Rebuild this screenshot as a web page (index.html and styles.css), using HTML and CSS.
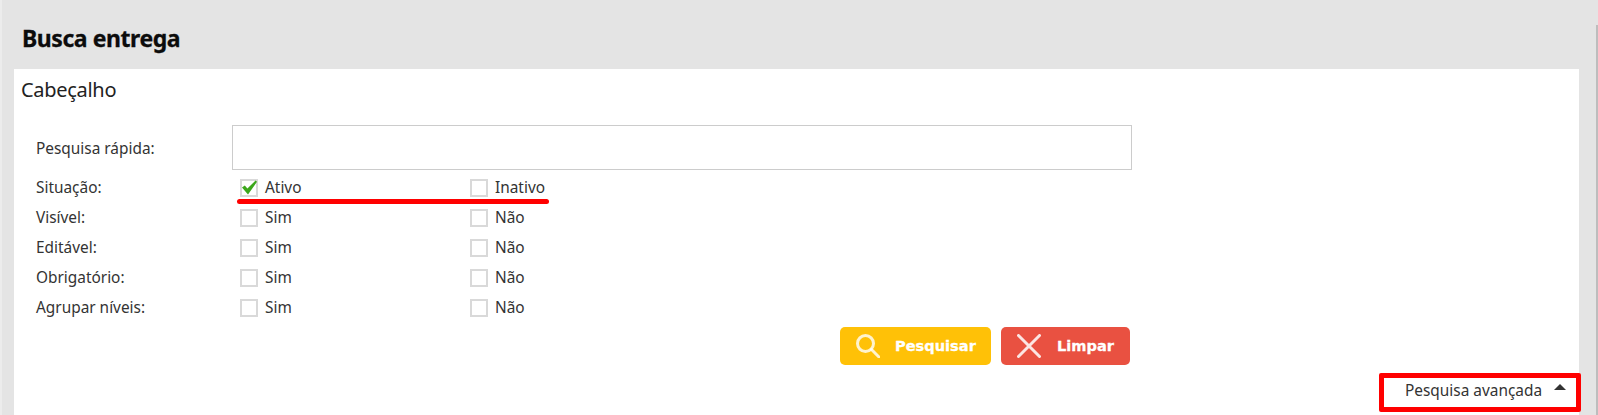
FILE: index.html
```html
<!doctype html>
<html>
<head>
<meta charset="utf-8">
<title>Busca entrega</title>
<link rel="stylesheet" href="styles.css">
</head>
<body>
	<div class="page">
		<h1 class="title">Busca entrega</h1>
		<div class="panel">
			<h2 class="subtitle">Cabeçalho</h2>
			<div class="quick">
				<label class="label">Pesquisa rápida:</label>
				<input class="text" type="text">
			</div>
			<div class="row marked">
				<span class="label">Situação:</span>
				<span class="opt"><span class="box"><svg width="18" height="18" viewBox="0 0 18 18"><path d="M2 8.5 4.8 6.4 7.4 9.6 15.6 1.6 17 2.8 8 15.4Z" fill="#3ca71b"/></svg></span>Ativo</span>
				<span class="opt"><span class="box"></span>Inativo</span>
				<span class="underline"></span>
			</div>
			<div class="row">
				<span class="label">Visível:</span>
				<span class="opt"><span class="box"></span>Sim</span>
				<span class="opt"><span class="box"></span>Não</span>
			</div>
			<div class="row">
				<span class="label">Editável:</span>
				<span class="opt"><span class="box"></span>Sim</span>
				<span class="opt"><span class="box"></span>Não</span>
			</div>
			<div class="row">
				<span class="label">Obrigatório:</span>
				<span class="opt"><span class="box"></span>Sim</span>
				<span class="opt"><span class="box"></span>Não</span>
			</div>
			<div class="row">
				<span class="label">Agrupar níveis:</span>
				<span class="opt"><span class="box"></span>Sim</span>
				<span class="opt"><span class="box"></span>Não</span>
			</div>
			<div class="buttons">
				<a class="btn yellow">
					<svg width="24" height="24" viewBox="0 0 24 24" fill="none" stroke="#fff" stroke-opacity=".8" stroke-width="3"><circle cx="9.5" cy="9.5" r="8"/><path d="M15.5 15.5 23 23" stroke-linecap="round"/></svg>
					<span>Pesquisar</span>
				</a>
				<a class="btn red">
					<svg width="24" height="24" viewBox="0 0 24 24" fill="none" stroke="#fff" stroke-opacity=".85" stroke-width="3"><path d="M1.5 1.5 22.5 22.5M22.5 1.5 1.5 22.5" stroke-linecap="round"/></svg>
					<span>Limpar</span>
				</a>
			</div>
			<div class="advanced-wrap">
				<div class="advanced">Pesquisa avançada<span class="arrow"></span></div>
			</div>
		</div>
	</div>
	<div class="scrollbar"></div>
</body>
</html>
```

FILE: styles.css
```css
*{
	margin: 0;
	padding: 0;
	box-sizing: border-box;
}
html,body{
	height: 100%;
	overflow: hidden;
}
body{
	background-color: #e4e4e4;
	font-family: "Noto Sans", sans-serif;
	color: #333;
}
.page{
	padding: 0 19px 0 12px;
	height: 415px;
	border-left: 2px solid #ececec;
	display: flex;
	flex-direction: column;
}
.title{
	flex: none;
	height: 69px;
	padding: 21px 0 0 8px;
	font: 700 23px/34px "Noto Sans", sans-serif;
	letter-spacing: -0.45px;
	-webkit-text-stroke: 0.3px #0c0c0c;
	color: #0c0c0c;
}
.panel{
	flex: none;
	height: 346px;
	background-color: #fff;
	padding-top: 7px;
}
.subtitle{
	font: 400 20px/28px "Noto Sans", sans-serif;
	letter-spacing: -0.3px;
	padding-left: 7px;
	color: #222;
	height: 49px;
}
.quick{
	display: flex;
	align-items: center;
	height: 45px;
	padding-left: 22px;
}
.quick .label{
	padding-top: 2px;
}
.label{
	width: 196px;
	font-size: 15.4px;
	line-height: 20px;
	flex-shrink: 0;
}
.text{
	width: 900px;
	height: 45px;
	border: 1px solid #ccc;
	background-color: #fff;
}
.row{
	display: flex;
	align-items: center;
	height: 30px;
	padding-left: 22px;
	position: relative;
}
.quick + .row{
	margin-top: 3px;
}
.opt{
	width: 230px;
	display: flex;
	align-items: center;
	font-size: 15.4px;
	line-height: 20px;
	margin-left: 8px;
	margin-right: -8px;
}
.box{
	width: 18px;
	height: 18px;
	margin-right: 7px;
	border: 2px solid #d9d9d9;
	background-color: #fff;
	position: relative;
}
.box svg{
	position: absolute;
	left: -2px;
	top: -2px;
}
.underline{
	position: absolute;
	left: 223px;
	top: 26px;
	width: 312px;
	height: 5px;
	background-color: #f00;
	border-radius: 3px;
	z-index: 1;
}
.buttons{
	display: flex;
	gap: 10px;
	margin: 4px 0 0 826px;
}
.btn{
	height: 38px;
	border-radius: 5px;
	display: flex;
	align-items: center;
	color: #fff;
	font: 700 14.6px/20px "DejaVu Sans", sans-serif;
	-webkit-text-stroke: 0.3px #fff;
}
.yellow{
	width: 151px;
	background-color: #ffc107;
	padding-left: 16px;
	gap: 15px;
}
.red{
	width: 129px;
	background-color: #e95141;
	padding-left: 16px;
	gap: 16px;
}
.advanced-wrap{
	display: flex;
	justify-content: flex-end;
	margin-top: 8px;
	margin-right: -2px;
}
.advanced{
	width: 202px;
	height: 39px;
	border: 5px solid #f00;
	border-radius: 2px;
	padding: 2px 0 0 21px;
	font-size: 15.4px;
	line-height: 22px;
	display: flex;
}
.arrow{
	width: 0;
	height: 0;
	margin: 4px 0 0 12px;
	border-left: 6px solid transparent;
	border-right: 6px solid transparent;
	border-bottom: 6px solid #333;
}
.scrollbar{
	position: fixed;
	top: 25px;
	right: 0;
	width: 2px;
	bottom: 0;
	background-color: #bdbdbd;
}
```
